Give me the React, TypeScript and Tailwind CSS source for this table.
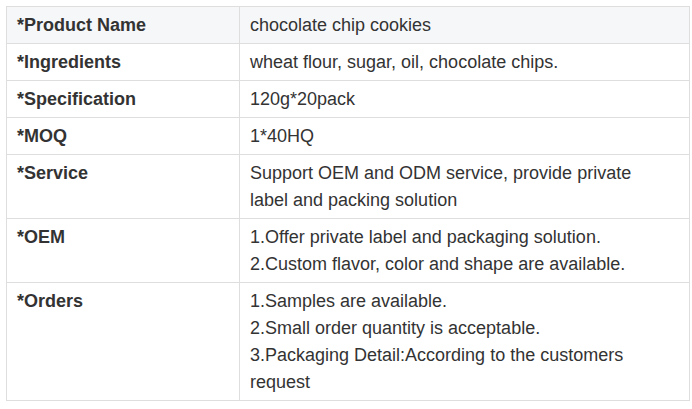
import React from "react";

const rows: { label: string; lines: string[] }[] = [
  { label: "*Product Name", lines: ["chocolate chip cookies"] },
  { label: "*Ingredients", lines: ["wheat flour, sugar, oil, chocolate chips."] },
  { label: "*Specification", lines: ["120g*20pack"] },
  { label: "*MOQ", lines: ["1*40HQ"] },
  {
    label: "*Service",
    lines: ["Support OEM and ODM service, provide private label and packing solution"],
  },
  {
    label: "*OEM",
    lines: [
      "1.Offer private label and packaging solution.",
      "2.Custom flavor, color and shape are available.",
    ],
  },
  {
    label: "*Orders",
    lines: [
      "1.Samples are available.",
      "2.Small order quantity is acceptable.",
      "3.Packaging Detail:According to the customers request",
    ],
  },
];

const App = () => {
  return (
    <div className="min-h-screen bg-white pl-[6px] pt-[6px] font-['Liberation_Sans',Arial,sans-serif] text-[18px] leading-[27px] text-[#333]">
      <table className="w-[684px] table-fixed border-collapse border border-[#dedede]">
        <colgroup>
          <col className="w-[233px]" />
          <col />
        </colgroup>
        <tbody>
          {rows.map((r, i) => (
            <tr key={r.label} className={i === 0 ? "bg-[#f6f7f9]" : ""}>
              <td className="border border-[#dedede] pl-[10px] pr-[10px] pt-[5px] pb-[4px] align-top font-bold">
                {r.label}
              </td>
              <td className="border border-[#dedede] pl-[10px] pr-[20px] pt-[5px] pb-[4px] align-top">
                {r.lines.map((l) => (
                  <div key={l}>{l}</div>
                ))}
              </td>
            </tr>
          ))}
        </tbody>
      </table>
    </div>
  );
};

export default App;
